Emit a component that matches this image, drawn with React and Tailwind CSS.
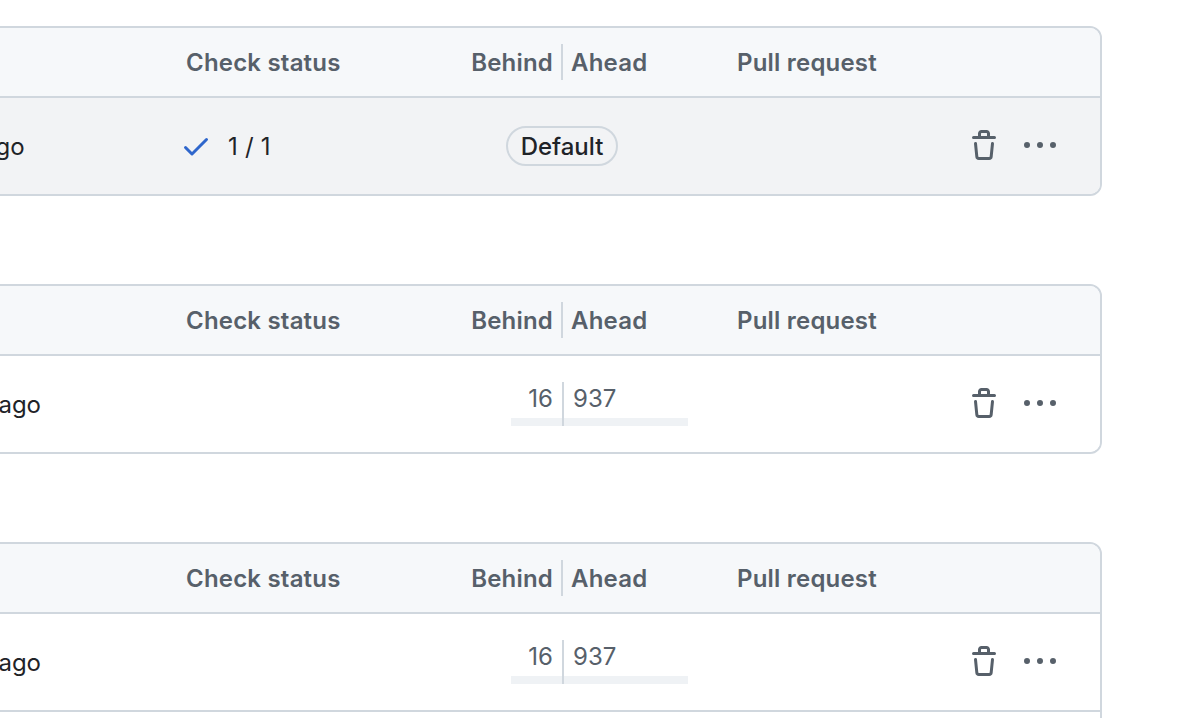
const cols = "grid grid-cols-[198px_270px_287px_1fr]";

function Trash() {
  return (
    <svg width="32" height="32" viewBox="0 0 16 16" fill="#57606a">
      <path d="M11 1.75V3h2.25a.75.75 0 0 1 0 1.5H2.75a.75.75 0 0 1 0-1.5H5V1.75C5 .784 5.784 0 6.75 0h2.5C10.216 0 11 .784 11 1.75ZM4.496 6.675l.66 6.6a.25.25 0 0 0 .249.225h5.19a.25.25 0 0 0 .249-.225l.66-6.6a.75.75 0 0 1 1.492.149l-.66 6.6A1.748 1.748 0 0 1 10.595 15h-5.19a1.75 1.75 0 0 1-1.741-1.575l-.66-6.6a.75.75 0 1 1 1.492-.15ZM6.5 1.75V3h3V1.75a.25.25 0 0 0-.25-.25h-2.5a.25.25 0 0 0-.25.25Z" />
    </svg>
  );
}

function Kebab() {
  return (
    <svg width="32" height="32" viewBox="0 0 16 16" fill="#57606a">
      <path d="M8 9a1.5 1.5 0 1 0 0-3 1.5 1.5 0 0 0 0 3ZM1.5 9a1.5 1.5 0 1 0 0-3 1.5 1.5 0 0 0 0 3Zm13 0a1.5 1.5 0 1 0 0-3 1.5 1.5 0 0 0 0 3Z" />
    </svg>
  );
}

function Check() {
  return (
    <svg width="32" height="32" viewBox="0 0 16 16" fill="#2f66cc">
      <path d="M13.78 4.22a.75.75 0 0 1 0 1.06l-7.25 7.25a.75.75 0 0 1-1.06 0L2.22 9.28a.751.751 0 0 1 .018-1.042.751.751 0 0 1 1.042-.018L6 10.94l6.72-6.72a.75.75 0 0 1 1.06 0Z" />
    </svg>
  );
}

function Header() {
  return (
    <div className={`${cols} h-[68px] items-center bg-[#f6f8fa] text-[24px] font-semibold tracking-[0.2px] text-[#57606a]`}>
      <div />
      <div className="pl-1.5 pt-0.5">Check status</div>
      <div className="flex items-center">
        <div className="w-[103px] pt-0.5 text-right">Behind</div>
        <div className="mx-2 h-9 w-0.5 bg-[#d0d7de]" />
        <div className="pt-0.5">Ahead</div>
      </div>
      <div className="pt-0.5">Pull request</div>
    </div>
  );
}

function Actions() {
  return (
    <div className="flex items-center justify-end gap-6 pr-11">
      <Trash />
      <Kebab />
    </div>
  );
}

function Counts() {
  return (
    <div className="flex h-11 text-[24px] leading-8 text-[#57606a]">
      <div className="relative ml-[61px] w-[51px] self-stretch">
        <div className="pr-[9px] pt-px text-right">16</div>
        <div className="absolute bottom-0 left-0 right-0 h-2 bg-[#eff2f5]" />
      </div>
      <div className="z-10 w-0.5 bg-[#d0d7de]" />
      <div className="relative w-[124px]">
        <div className="pl-[9px] pt-px">937</div>
        <div className="absolute bottom-0 left-0 right-0 h-2 bg-[#eff2f5]" />
      </div>
    </div>
  );
}

function Row({ active }) {
  return (
    <div className={`${cols} h-[98px] items-center border-t-2 border-[#d0d7de] ${active ? "bg-[#f2f3f5]" : "bg-white"} text-[24px] text-[#1f2328]`}>
      <div className={`whitespace-nowrap pt-0.5 text-right ${active ? "pr-[159px]" : "pr-[139px]"}`}>ago</div>
      <div>
        {active && (
          <div className="flex items-center gap-4">
            <Check />
            <span className="pt-0.5 tracking-[0.2px]">1 / 1</span>
          </div>
        )}
      </div>
      <div>
        {active ? (
          <div className="ml-14 flex h-10 w-28 items-center justify-center rounded-full border-2 border-[#d0d7de] pt-0.5 font-medium">
            Default
          </div>
        ) : (
          <Counts />
        )}
      </div>
      <Actions />
    </div>
  );
}

function Card({ children }) {
  return (
    <div className="overflow-hidden rounded-xl border-2 border-[#d0d7de] bg-white">
      <Header />
      {children}
    </div>
  );
}

export default function App() {
  return (
    <div className="h-[718px] overflow-hidden bg-white font-['Inter',sans-serif]">
      <div className="ml-[-20px] flex w-[1122px] flex-col gap-[88px] pt-[26px]">
        <Card>
          <Row active />
        </Card>
        <Card>
          <Row />
        </Card>
        <Card>
          <Row />
          <div className="h-[98px] border-t-2 border-[#d0d7de]" />
        </Card>
      </div>
    </div>
  );
}
